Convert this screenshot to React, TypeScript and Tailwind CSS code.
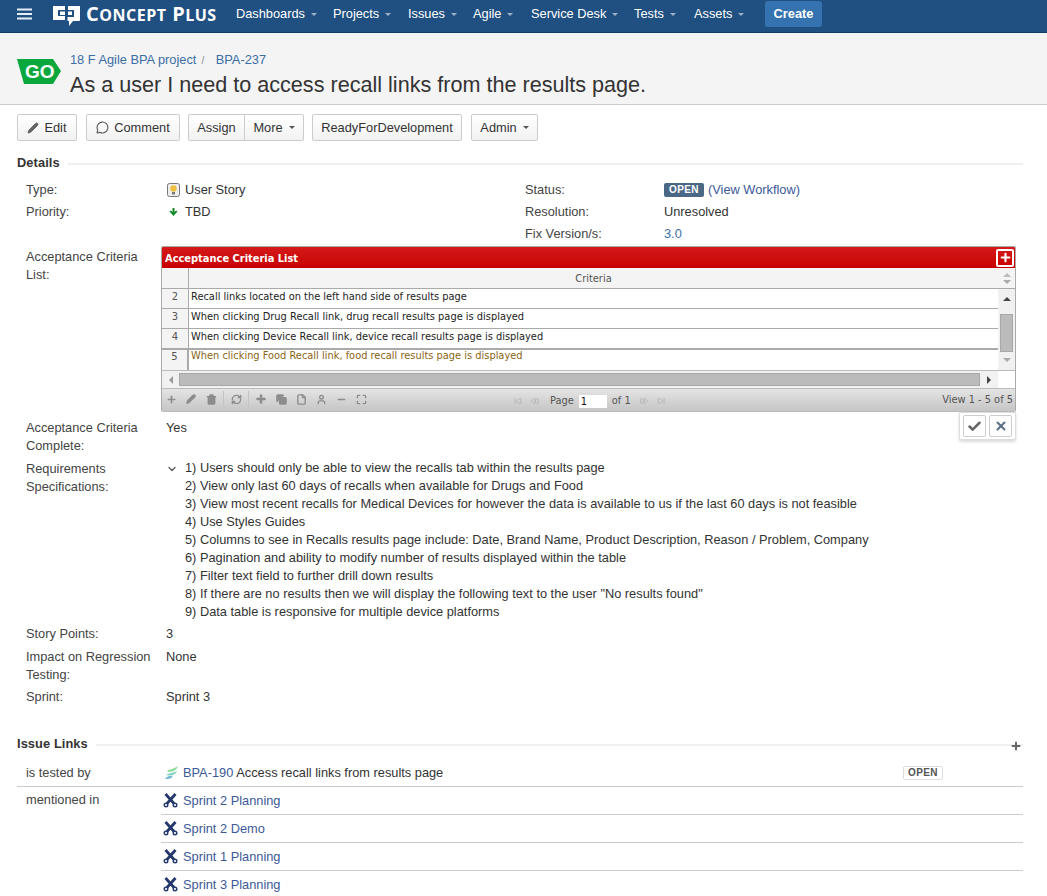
import { ChevronDown, Pencil, MessageCircle, Check, X, Plus, Trash2, RefreshCw, Copy, File, User, Minus, Maximize, SkipBack, Rewind, FastForward, SkipForward } from "lucide-react";

const navItems = [
	{ label: "Dashboards", w: "w-[97px]" },
	{ label: "Projects", w: "w-[75px]" },
	{ label: "Issues", w: "w-[65px]" },
	{ label: "Agile", w: "w-[58px]" },
	{ label: "Service Desk", w: "w-[103px]" },
	{ label: "Tests", w: "w-[60px]" },
	{ label: "Assets", w: "w-[71px]" },
];

const requirements = [
	"1) Users should only be able to view the recalls tab within the results page",
	"2) View only last 60 days of recalls when available for Drugs and Food",
	"3) View most recent recalls for Medical Devices for however the data is available to us if the last 60 days is not feasible",
	"4) Use Styles Guides",
	"5) Columns to see in Recalls results page include: Date, Brand Name, Product Description, Reason / Problem, Company",
	"6) Pagination and ability to modify number of results displayed within the table",
	"7) Filter text field to further drill down results",
	'8) If there are no results then we will display the following text to the user "No results found"',
	"9) Data table is responsive for multiple device platforms",
];

const criteria = [
	{ n: 2, text: "Recall links located on the left hand side of results page" },
	{ n: 3, text: "When clicking Drug Recall link, drug recall results page is displayed" },
	{ n: 4, text: "When clicking Device Recall link, device recall results page is displayed" },
];

function Caret({ color = "border-t-[#9fb3c8]" }: { color?: string }) {
	return <span className={`inline-block ml-1.5 w-0 h-0 border-x-[3px] border-x-transparent border-t-[3px] align-middle ${color}`} />;
}

function Logo() {
	return (
		<svg width="28" height="22" viewBox="0 0 28 22" className="shrink-0 mt-[4px]">
			<path d="M0 1H12V5H5V11H12V15H0Z" fill="#fff" />
			<rect x="7" y="6.5" width="5" height="3.5" fill="#fff" />
			<path d="M15 1H27V15C27 15.5 26.5 16 26 16H20L16 21V16H14.5V12H21V5H15Z" fill="#fff" />
			<rect x="15" y="6.5" width="4" height="3.5" fill="#fff" />
		</svg>
	);
}

function SprintIcon() {
	return (
		<svg width="15" height="15" viewBox="0 0 15 15" className="shrink-0">
			<path d="M2.5 1L11 10.5M12.5 1L4 10.5" stroke="#24386b" strokeWidth="2.8" />
			<circle cx="3" cy="12" r="1.8" fill="none" stroke="#24386b" strokeWidth="1.4" />
			<circle cx="12" cy="12" r="1.8" fill="none" stroke="#24386b" strokeWidth="1.4" />
		</svg>
	);
}

function Btn({ children, className = "" }: { children: React.ReactNode; className?: string }) {
	return (
		<div className={`h-[27px] flex items-center justify-center border border-[#ccc] rounded-[2px] bg-gradient-to-b from-white to-[#f2f2f2] text-[#333] whitespace-nowrap ${className}`}>
			{children}
		</div>
	);
}

function Field({ label, children, className = "" }: { label: React.ReactNode; children: React.ReactNode; className?: string }) {
	return (
		<div className={`flex ${className}`}>
			<div className="w-[149px] shrink-0 pl-[9px] text-[#444]">{label}</div>
			<div className="flex-1 min-w-0 text-[#333]">{children}</div>
		</div>
	);
}

function SectionHead({ title }: { title: string }) {
	return (
		<div className="flex items-center h-[18px] gap-2">
			<span className="font-bold text-[#333] text-[12.8px] tracking-[0.1px]">{title}</span>
			<span className="flex-1 h-0.5 bg-[#f0f0f0] mt-0.5" />
		</div>
	);
}

function PagerIcons() {
	const cls = "w-5 flex justify-center text-[#8c8c8c]";
	return (
		<div className="flex items-center -ml-px pb-[3px]">
			<span className={cls}><Plus size={11} strokeWidth={3.5} /></span>
			<span className={cls}><Pencil size={10} strokeWidth={3} fill="#8c8c8c" /></span>
			<span className={cls}><Trash2 size={11} strokeWidth={3} fill="#8c8c8c" /></span>
			<span className="w-px h-4 mx-[2px] bg-[#c4c4c4]" />
			<span className={cls}><RefreshCw size={11} strokeWidth={3} /></span>
			<span className="w-px h-4 mx-[2px] bg-[#c4c4c4]" />
			<span className={cls}><Plus size={12} strokeWidth={5} /></span>
			<span className={cls}><Copy size={11} strokeWidth={3} fill="#8c8c8c" /></span>
			<span className={cls}><File size={11} strokeWidth={3} /></span>
			<span className={cls}><User size={11} strokeWidth={3} /></span>
			<span className={cls}><Minus size={11} strokeWidth={3} /></span>
			<span className={cls}><Maximize size={11} strokeWidth={3} /></span>
		</div>
	);
}

function CriteriaGrid() {
	return (
		<div className="w-[855px] h-[166px] border border-[#aaa] border-b-[#bbb] rounded-[2px] overflow-hidden font-['DejaVu_Sans',sans-serif] text-[9.85px] flex flex-col relative">
			<div className="h-[21px] shrink-0 bg-gradient-to-b from-[#d41818] to-[#c80000] flex items-center justify-between pl-[3px] pr-[1px]">
				<span className="text-white font-bold pt-[2px] text-[9.9px]">Acceptance Criteria List</span>
				<span className="w-[18px] h-[18px] rounded-[2px] border-2 border-white flex items-center justify-center">
					<Plus size={13} strokeWidth={4} className="text-white" />
				</span>
			</div>
			<div className="h-[21px] shrink-0 bg-[#f4f4f4] border-b border-[#aaa] flex text-[#555]">
				<div className="w-[27px] border-r border-[#aaa]" />
				<div className="flex-1 text-center leading-[21px]">Criteria</div>
				<div className="w-[17px] flex flex-col items-center justify-center gap-[3px]">
					<span className="w-0 h-0 border-x-[4px] border-x-transparent border-b-[4px] border-b-[#bbb]" />
					<span className="w-0 h-0 border-x-[4px] border-x-transparent border-t-[4px] border-t-[#aaa]" />
				</div>
			</div>
			<div className="flex h-[81px] shrink-0">
				<div className="flex-1 min-w-0">
					{criteria.map((r) => (
						<div key={r.n} className="flex h-5 border-b border-[#aaa] leading-[16px]">
							<div className="w-[27px] shrink-0 bg-[#f4f4f4] border-r border-[#aaa] text-center text-[#555] text-[10px]">{r.n}</div>
							<div className="pl-0.5 text-[#222]">{r.text}</div>
						</div>
					))}
					<div className="flex h-[21px] border-t border-[#aaa] leading-[12px]">
						<div className="w-[27px] shrink-0 bg-[#f4f4f4] border-r-2 border-[#aaa] text-center text-[#555] text-[10px] leading-[14px]">5</div>
						<div className="pl-0.5 text-[#8a6414]">When clicking Food Recall link, food recall results page is displayed</div>
					</div>
				</div>
				<div className="w-[17px] shrink-0 bg-[#f1f1f1] flex flex-col items-center">
					<span className="mt-2 w-0 h-0 border-x-[4px] border-x-transparent border-b-[4px] border-b-[#444]" />
					<span className="mt-[13px] w-[13px] h-[38px] bg-[#bbb] border border-[#a8a8a8]" />
					<span className="mt-[6px] w-0 h-0 border-x-[4px] border-x-transparent border-t-[4px] border-t-[#aaa]" />
				</div>
			</div>
			<div className="h-[18px] shrink-0 flex items-center border-t border-[#bbb]">
				<div className="flex-1 bg-[#f1f1f1] h-full flex items-center">
					<span className="w-[17px] flex justify-center">
						<span className="w-0 h-0 border-y-[4px] border-y-transparent border-r-[4px] border-r-[#999]" />
					</span>
					<span className="flex-1 h-[13px] bg-[#bbb] border border-[#a8a8a8]" />
					<span className="w-[18px] flex justify-center">
						<span className="w-0 h-0 border-y-[4px] border-y-transparent border-l-[4px] border-l-[#444]" />
					</span>
				</div>
				<div className="w-[17px] h-full bg-white" />
			</div>
			<div className="h-6 shrink-0 border-t border-[#bbb] bg-gradient-to-b from-[#e4e4e4] to-[#c4c4c4] flex items-center relative text-[#555]">
				<PagerIcons />
				<div className="absolute left-[352px] top-[3px] flex items-center gap-[5px]">
					<SkipBack size={8} className="text-[#aaa]" />
					<Rewind size={8} className="text-[#aaa] ml-1" />
					<span className="ml-1.5">Page</span>
					<span className="w-[28px] h-[13px] bg-white text-[#111] pl-0.5 leading-[13px]">1</span>
					<span>of 1</span>
					<FastForward size={8} className="text-[#aaa] ml-1" />
					<SkipForward size={8} className="text-[#aaa] ml-1" />
				</div>
				<span className="ml-auto pr-[2px] pb-[2px]">View 1 - 5 of 5</span>
			</div>
		</div>
	);
}

export default function App() {
	return (
		<div className="w-[1047px] h-[896px] overflow-hidden bg-white font-['Liberation_Sans',Arial,sans-serif] text-[12.8px] leading-[18px] text-[#333]">
			<header className="h-[33px] pb-[4px] bg-[#205081] border-b border-[#123a62] flex items-center">
				<svg width="16" height="12" viewBox="0 0 16 12" className="ml-[17px] mr-[20px]">
					<path d="M0 1.5H15M0 6H15M0 10.5H15" stroke="#e6edf5" strokeWidth="2" />
				</svg>
				<Logo />
				<span className="ml-[5px] w-[150px] text-white font-bold font-['Open_Sans',sans-serif] text-[20px] tracking-[0.5px] whitespace-nowrap">
					C<span className="text-[16px]">ONCEPT</span> P<span className="text-[16px]">LUS</span>
				</span>
				<nav className="flex items-center">
					{navItems.map((n) => (
						<span key={n.label} className={`text-white whitespace-nowrap ${n.w}`}>
							{n.label}
							<Caret />
						</span>
					))}
				</nav>
				<div className="w-[57px] h-[26px] rounded-[3px] bg-[#3572b0] text-white font-bold text-[12.8px] flex items-center justify-center">Create</div>
			</header>

			<section className="h-[72px] bg-[#f4f4f4] border-b border-[#ccc] flex pl-[17px]">
				<svg width="44" height="28" viewBox="0 0 44 28" className="mt-[25px] shrink-0">
					<path d="M0 1H36L44 13L36 26H7Z" fill="#0aa83c" />
					<text x="8" y="20" fill="#fff" fontSize="19" fontWeight="700" fontFamily="Liberation Sans, sans-serif">GO</text>
				</svg>
				<div className="ml-[9px]">
					<div className="mt-[18px] text-[#3b6ea5] whitespace-nowrap">
						18 F Agile BPA project<span className="text-[#888] ml-[5px] mr-[8px] text-[10px]">/</span> <span>BPA-237</span>
					</div>
					<h1 className="text-[21.6px] leading-[30px] text-[#333]">As a user I need to access recall links from the results page.</h1>
				</div>
			</section>

			<div className="flex mt-[9px] pl-[17px]">
				<Btn className="w-[60px] mr-[9px] gap-[5px]">
					<Pencil size={12} fill="#666" className="text-[#666]" /> Edit
				</Btn>
				<Btn className="w-[94px] mr-2 gap-[5px]">
					<MessageCircle size={13} className="text-[#555]" /> Comment
				</Btn>
				<Btn className="w-[57px] rounded-r-none">Assign</Btn>
				<Btn className="w-[60px] mr-2 -ml-px rounded-l-none">
					More
					<Caret color="border-t-[#555]" />
				</Btn>
				<Btn className="w-[150px] mr-[9px]">ReadyForDevelopment</Btn>
				<Btn className="w-[67px]">
					Admin
					<Caret color="border-t-[#555]" />
				</Btn>
			</div>

			<div className="pl-[17px] pr-[24px] mt-[13px]">
				<SectionHead title="Details" />
				<div className="mt-[9px]">
					<div className="flex h-[65px]">
						<div className="w-[508px]">
							<Field label="Type:" className="h-[22px]">
								<span className="flex items-center gap-[5px] pl-px">
									<svg width="13" height="14" viewBox="0 0 13 14">
										<rect x="0.5" y="0.5" width="12" height="13" rx="2" fill="#eee" stroke="#777" />
										<circle cx="6.5" cy="5.5" r="3.2" fill="#f0c040" />
										<rect x="5" y="9" width="3" height="2.5" fill="#777" />
									</svg>
									User Story
								</span>
							</Field>
							<Field label="Priority:" className="h-[22px]">
								<span className="flex items-center gap-[5px] pl-px">
									<svg width="13" height="12" viewBox="0 0 13 12">
										<path d="M6.5 10L2.5 5.5L4 4.5L5.5 6V2H7.5V6L9 4.5L10.5 5.5Z" fill="#14892c" />
									</svg>
									TBD
								</span>
							</Field>
						</div>
						<div>
							<div className="flex h-[22px]">
								<span className="w-[139px] text-[#444]">Status:</span>
								<span className="flex items-center h-[18px] gap-[4px]">
									<span className="h-[14px] w-[40px] rounded-[2px] bg-[#4a6785] text-white font-bold text-[10px] tracking-[0.4px] flex items-center justify-center">OPEN</span>
									<span className="text-[#3b5998]">(View Workflow)</span>
								</span>
							</div>
							<div className="flex h-[22px]">
								<span className="w-[139px] text-[#444]">Resolution:</span>
								<span>Unresolved</span>
							</div>
							<div className="flex h-[21px]">
								<span className="w-[139px] text-[#444]">Fix Version/s:</span>
								<span className="text-[#3b6ea5]">3.0</span>
							</div>
						</div>
					</div>
					<div className="flex relative">
						<div className="w-[144px] shrink-0 pl-[9px] pt-[2px] text-[#444]">
							Acceptance Criteria
							<br />
							List:
						</div>
						<CriteriaGrid />
						<div className="absolute left-[942px] top-[166px] w-[57px] h-[28px] bg-white border border-[#ddd] rounded-b-[2px] shadow-[0_2px_3px_rgba(0,0,0,0.15)] flex items-center justify-center gap-[3px]">
							<span className="w-[23px] h-[22px] border border-[#ccc] rounded-[2px] flex items-center justify-center">
								<Check size={15} strokeWidth={4} className="text-[#666]" />
							</span>
							<span className="w-[23px] h-[22px] border border-[#ccc] rounded-[2px] flex items-center justify-center">
								<X size={14} strokeWidth={3.5} className="text-[#5c6f85]" />
							</span>
						</div>
					</div>
					<Field label={<>Acceptance Criteria<br />Complete:</>} className="mt-[7px]">
						<span className="block">Yes</span>
					</Field>
					<Field label={<>Requirements<br />Specifications:</>} className="mt-[5px]">
						<div className="flex -mt-px">
							<ChevronDown size={12} strokeWidth={2.5} className="mt-[4px] mr-[7px] text-[#555] shrink-0" />
							<div>
								{requirements.map((r) => (
									<div key={r} className="whitespace-nowrap">{r}</div>
								))}
							</div>
						</div>
					</Field>
					<Field label="Story Points:" className="mt-[4px]">3</Field>
					<Field label={<>Impact on Regression<br />Testing:</>} className="mt-[5px]">None</Field>
					<Field label="Sprint:" className="mt-[4px]">Sprint 3</Field>
				</div>

				<div className="mt-[29px] relative">
					<SectionHead title="Issue Links" />
					<Plus size={12} strokeWidth={4} className="absolute right-[1px] top-[5px] text-[#666]" />
				</div>
				<div className="mt-[6px]">
					<div className="flex h-[28px] border-b border-[#ccc]">
						<div className="w-[144px] pl-[9px] flex items-center text-[#444]">is tested by</div>
						<div className="flex-1 flex items-center pl-[4px] gap-[5px]">
							<svg width="13" height="13" viewBox="0 0 13 13">
								<path d="M2 5C5 3 9 3 13 0C12 3 9 6 4 6Z" fill="#8fdc9a" />
								<path d="M1 9C4 7 8 7 12 5C11 8 8 9 4 9.5Z" fill="#7fd0c0" />
								<path d="M0 13C2 10 5 10 8 9.5C7 12 5 13 2 13Z" fill="#6fb8d8" />
							</svg>
							<span className="text-[#3b5998]">BPA-190</span>
							<span className="-ml-[2px]">Access recall links from results page</span>
							<span className="ml-auto mr-[80px] w-[40px] h-[14px] border border-[#ddd] rounded-[2px] text-[#555] font-bold text-[10px] tracking-[0.4px] flex items-center justify-center">OPEN</span>
						</div>
					</div>
					<div className="flex">
						<div className="w-[144px] pl-[9px] pt-[4px] text-[#444]">mentioned in</div>
						<div className="flex-1">
							{["Sprint 2 Planning", "Sprint 2 Demo", "Sprint 1 Planning", "Sprint 3 Planning"].map((s) => (
								<div key={s} className="h-[28px] border-b border-[#ccc] flex items-center gap-[5px] pl-[2px] text-[#3b5998]">
									<SprintIcon />
									{s}
								</div>
							))}
						</div>
					</div>
				</div>
			</div>
		</div>
	);
}
